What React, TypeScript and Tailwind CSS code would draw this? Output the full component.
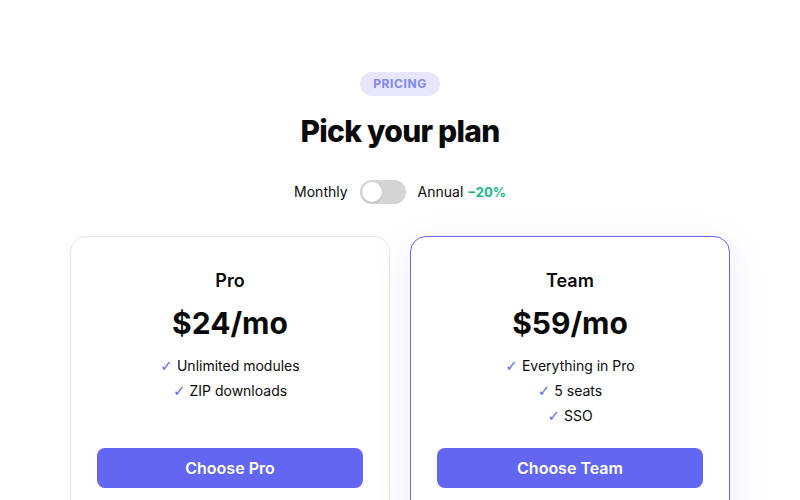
const plans = [
  { name: "Pro", price: "$24/mo", features: ["Unlimited modules", "ZIP downloads"], featured: false },
  { name: "Team", price: "$59/mo", features: ["Everything in Pro", "5 seats", "SSO"], featured: true },
];

function Check() {
  return (
    <span className="mr-1 leading-none text-[#6366f1]" style={{ fontFamily: "'DejaVu Sans', sans-serif", fontSize: 15 }}>
      ✓
    </span>
  );
}

export default function App() {
  return (
    <div className="h-[500px] overflow-hidden bg-white text-[#0a0a0a]" style={{ fontFamily: "Inter, 'Liberation Sans', sans-serif" }}>
      <div className="flex flex-col items-center pt-[72px]">
        <span className="flex h-6 items-center rounded-full bg-[#e6e7fc] px-[13px] text-xs font-bold uppercase tracking-wider text-[#7f86f3]">
          Pricing
        </span>
        <h1 className="mt-[17px] text-[30px] font-extrabold leading-9 tracking-tight">Pick your plan</h1>
        <div className="mt-[31px] flex items-center gap-3 text-sm">
          <span>Monthly</span>
          <button className="flex h-6 w-[46px] items-center rounded-full bg-[#d4d4d4] px-[2px]">
            <span className="h-5 w-5 rounded-full bg-white shadow-sm" />
          </button>
          <span>
            Annual <span className="text-[13px] font-bold text-[#10b981]">−20%</span>
          </span>
        </div>
        <div className="mt-8 grid w-[660px] grid-cols-2 gap-5">
          {plans.map((p) => (
            <div
              key={p.name}
              className={
                p.featured
                  ? "flex flex-col rounded-2xl border border-[#6366f1] bg-white px-[26px] pt-[30px] pb-8 text-center shadow-[0_10px_36px_rgba(99,102,241,0.14)]"
                  : "flex flex-col rounded-2xl border border-[#e5e5e5] bg-white px-[26px] pt-[30px] pb-8 text-center"
              }
            >
              <div className="text-lg font-semibold leading-7">{p.name}</div>
              <div className="mt-[10px] text-[30px] font-bold leading-9">{p.price}</div>
              <ul className="mb-5 mt-3 text-sm leading-[25px]">
                {p.features.map((f) => (
                  <li key={f} className="h-[25px]">
                    <Check />
                    {f}
                  </li>
                ))}
              </ul>
              <button className="mt-auto h-10 w-full rounded-lg bg-[#6366f1] text-base font-semibold text-white">
                Choose {p.name}
              </button>
            </div>
          ))}
        </div>
      </div>
    </div>
  );
}
